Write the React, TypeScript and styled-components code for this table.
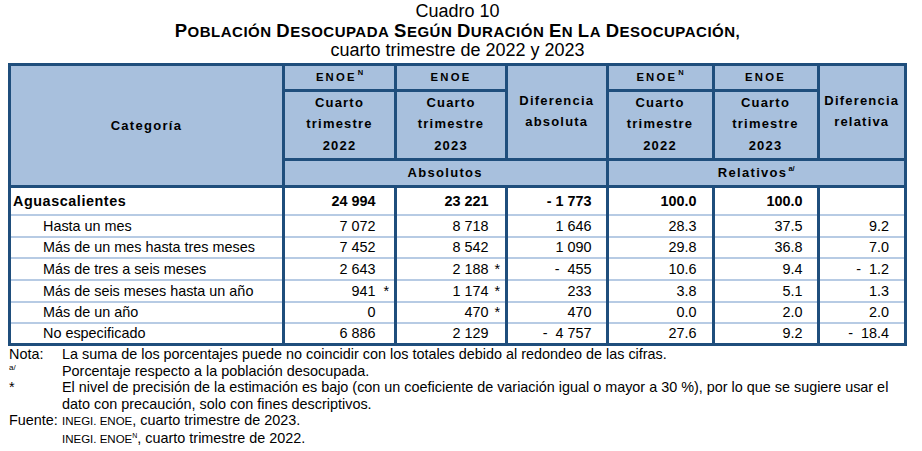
import React from 'react';
import styled, { createGlobalStyle } from 'styled-components';

const GlobalStyle = createGlobalStyle`
  html, body { margin: 0; padding: 0; background: #ffffff; }
  body { font-family: "Liberation Sans", Arial, sans-serif; color: #000; }
`;

const DARK = '#1f4e7c';
const LIGHT = '#b7cbe4';
const HEAD_BG = '#a8c0dd';

const Page = styled.div`
  width: 922px;
  height: 451px;
  overflow: hidden;
  padding: 2px 0 0 8px;
  box-sizing: border-box;
`;

const Heading = styled.header`
  width: 899px;
  text-align: center;
  font-size: 18px;
  line-height: 19px;
`;

const Title = styled.div`
  font-weight: bold;
  font-size: 15px;
  letter-spacing: 0.5px;
  text-transform: uppercase;
`;

const TitleWord = styled.span`
  display: inline-block;
  &::first-letter {
    font-size: 18.5px;
  }
`;

const Table = styled.table`
  margin-top: 3px;
  border-collapse: collapse;
  table-layout: fixed;
  width: 899px;
  font-size: 14.4px;
`;

const HeadRow = styled.tr<{ $h: number }>`
  height: ${(p) => p.$h}px;
`;

const Th = styled.th<{ $top?: boolean; $pt?: number; $ls?: number; $size?: number }>`
  background: ${HEAD_BG};
  border: 3px solid ${DARK};
  font-weight: bold;
  font-size: ${(p) => p.$size ?? 13}px;
  letter-spacing: ${(p) => p.$ls ?? 1.2}px;
  line-height: 21.3px;
  text-align: center;
  vertical-align: ${(p) => (p.$top ? 'top' : 'middle')};
  padding: ${(p) => p.$pt ?? 0}px 0 0 0;
`;

const Sup = styled.sup`
  font-size: 7.5px;
  letter-spacing: 0;
  vertical-align: 6px;
  line-height: 0;
  margin-left: 1px;
`;

const Row = styled.tr<{ $h: number }>`
  height: ${(p) => p.$h}px;
`;

const Td = styled.td<{ $first?: boolean; $last?: boolean; $bold?: boolean; $pr?: number }>`
  border-left: 3px solid ${DARK};
  border-right: 3px solid ${DARK};
  border-top: ${(p) => (p.$first ? `3px solid ${DARK}` : `2px solid ${LIGHT}`)};
  border-bottom: ${(p) => (p.$last ? `3px solid ${DARK}` : `2px solid ${LIGHT}`)};
  font-weight: ${(p) => (p.$bold ? 'bold' : 'normal')};
  text-align: right;
  white-space: pre;
  padding: 0 ${(p) => p.$pr ?? 14}px 0 0;
  line-height: 16px;
  vertical-align: middle;
`;

const CatTd = styled(Td)<{ $indent?: boolean }>`
  text-align: left;
  padding-left: ${(p) => (p.$indent ? 32 : 2)}px;
  letter-spacing: ${(p) => (p.$bold ? 0.55 : 0)}px;
`;

const Star = styled.span<{ $w: number }>`
  display: inline-block;
  width: ${(p) => p.$w}px;
  text-align: right;
`;

const Notes = styled.section`
  display: grid;
  grid-template-columns: 53px 1fr;
  font-size: 14.4px;
  line-height: 16.5px;
  margin-left: 1px;
`;

const NoteLabel = styled.div<{ $tiny?: boolean }>`
  font-size: ${(p) => (p.$tiny ? 8 : 14.4)}px;
  line-height: ${(p) => (p.$tiny ? 10 : 16.5)}px;
`;

const NoteText = styled.div`
  white-space: nowrap;
`;

const Small = styled.span`
  font-size: 11.5px;
`;

const SmallSup = styled.sup`
  font-size: 7px;
  vertical-align: 5px;
  line-height: 0;
`;

type DataRow = {
  label: string;
  bold?: boolean;
  a: [string, boolean];
  b: [string, boolean];
  diff: string;
  r1: string;
  r2: string;
  dr: string;
};

const rows: DataRow[] = [
  { label: 'Aguascalientes', bold: true, a: ['24 994', false], b: ['23 221', false], diff: '- 1 773', r1: '100.0', r2: '100.0', dr: '' },
  { label: 'Hasta un mes', a: ['7 072', false], b: ['8 718', false], diff: '1 646', r1: '28.3', r2: '37.5', dr: '9.2' },
  { label: 'Más de un mes hasta tres meses', a: ['7 452', false], b: ['8 542', false], diff: '1 090', r1: '29.8', r2: '36.8', dr: '7.0' },
  { label: 'Más de tres a seis meses', a: ['2 643', false], b: ['2 188', true], diff: '-  455', r1: '10.6', r2: '9.4', dr: '-  1.2' },
  { label: 'Más de seis meses hasta un año', a: ['941', true], b: ['1 174', true], diff: '233', r1: '3.8', r2: '5.1', dr: '1.3' },
  { label: 'Más de un año', a: ['0', false], b: ['470', true], diff: '470', r1: '0.0', r2: '2.0', dr: '2.0' },
  { label: 'No especificado', a: ['6 886', false], b: ['2 129', false], diff: '-  4 757', r1: '27.6', r2: '9.2', dr: '-  18.4' },
];

const rowHeights = [28, 22, 21, 22, 22, 21, 22];

const titleWords = ['Población', 'Desocupada', 'Según', 'Duración', 'En', 'La', 'Desocupación,'];

const Enoe: React.FC<{ n?: boolean }> = ({ n }) => (
  <Th $ls={2.2} $size={11.3}>
    ENOE{n ? <Sup>N</Sup> : null}
  </Th>
);

const Quarter: React.FC<{ year: string }> = ({ year }) => (
  <Th $top>
    Cuarto<br />trimestre<br />{year}
  </Th>
);

export default function App() {
  return (
    <Page>
      <GlobalStyle />
      <Heading>
        <div>Cuadro 10</div>
        <Title>
          {titleWords.map((w, i) => (
            <React.Fragment key={i}>
              {i > 0 ? ' ' : null}
              <TitleWord>{w}</TitleWord>
            </React.Fragment>
          ))}
        </Title>
        <div>cuarto trimestre de 2022 y 2023</div>
      </Heading>
      <Table>
        <colgroup>
          <col style={{ width: 274 }} />
          <col style={{ width: 112 }} />
          <col style={{ width: 111 }} />
          <col style={{ width: 100.5 }} />
          <col style={{ width: 106 }} />
          <col style={{ width: 105 }} />
          <col style={{ width: 87.5 }} />
        </colgroup>
        <thead>
          <HeadRow $h={26}>
            <Th rowSpan={3} $ls={1.3}>Categoría</Th>
            <Enoe n />
            <Enoe />
            <Th rowSpan={2} $top $pt={24}>Diferencia<br />absoluta</Th>
            <Enoe n />
            <Enoe />
            <Th rowSpan={2} $top $pt={24}>Diferencia<br />relativa</Th>
          </HeadRow>
          <HeadRow $h={69}>
            <Quarter year="2022" />
            <Quarter year="2023" />
            <Quarter year="2022" />
            <Quarter year="2023" />
          </HeadRow>
          <HeadRow $h={27}>
            <Th colSpan={3} $ls={1.3}>Absolutos</Th>
            <Th colSpan={3} $ls={1.3}>Relativos<Sup>a/</Sup></Th>
          </HeadRow>
        </thead>
        <tbody>
          {rows.map((r, i) => {
            const first = i === 0;
            const last = i === rows.length - 1;
            return (
              <Row key={r.label} $h={rowHeights[i]}>
                <CatTd $first={first} $last={last} $bold={r.bold} $indent={!r.bold}>{r.label}</CatTd>
                <Td $first={first} $last={last} $bold={r.bold} $pr={5}>
                  {r.a[0]}<Star $w={13.5}>{r.a[1] ? '*' : ''}</Star>
                </Td>
                <Td $first={first} $last={last} $bold={r.bold} $pr={5}>
                  {r.b[0]}<Star $w={11.5}>{r.b[1] ? '*' : ''}</Star>
                </Td>
                <Td $first={first} $last={last} $bold={r.bold}>{r.diff}</Td>
                <Td $first={first} $last={last} $bold={r.bold} $pr={15}>{r.r1}</Td>
                <Td $first={first} $last={last} $bold={r.bold} $pr={14}>{r.r2}</Td>
                <Td $first={first} $last={last} $bold={r.bold} $pr={15}>{r.dr}</Td>
              </Row>
            );
          })}
        </tbody>
      </Table>
      <Notes>
        <NoteLabel>Nota:</NoteLabel>
        <NoteText>La suma de los porcentajes puede no coincidir con los totales debido al redondeo de las cifras.</NoteText>
        <NoteLabel $tiny>a/</NoteLabel>
        <NoteText>Porcentaje respecto a la población desocupada.</NoteText>
        <NoteLabel>*</NoteLabel>
        <NoteText>
          El nivel de precisión de la estimación es bajo (con un coeficiente de variación igual o mayor a 30 %), por lo que se sugiere usar el
          <br />
          dato con precaución, solo con fines descriptivos.
        </NoteText>
        <NoteLabel>Fuente:</NoteLabel>
        <NoteText>
          <Small>INEGI. ENOE</Small>, cuarto trimestre de 2023.
          <br />
          <Small>INEGI. ENOE</Small><SmallSup>N</SmallSup>, cuarto trimestre de 2022.
        </NoteText>
      </Notes>
    </Page>
  );
}
